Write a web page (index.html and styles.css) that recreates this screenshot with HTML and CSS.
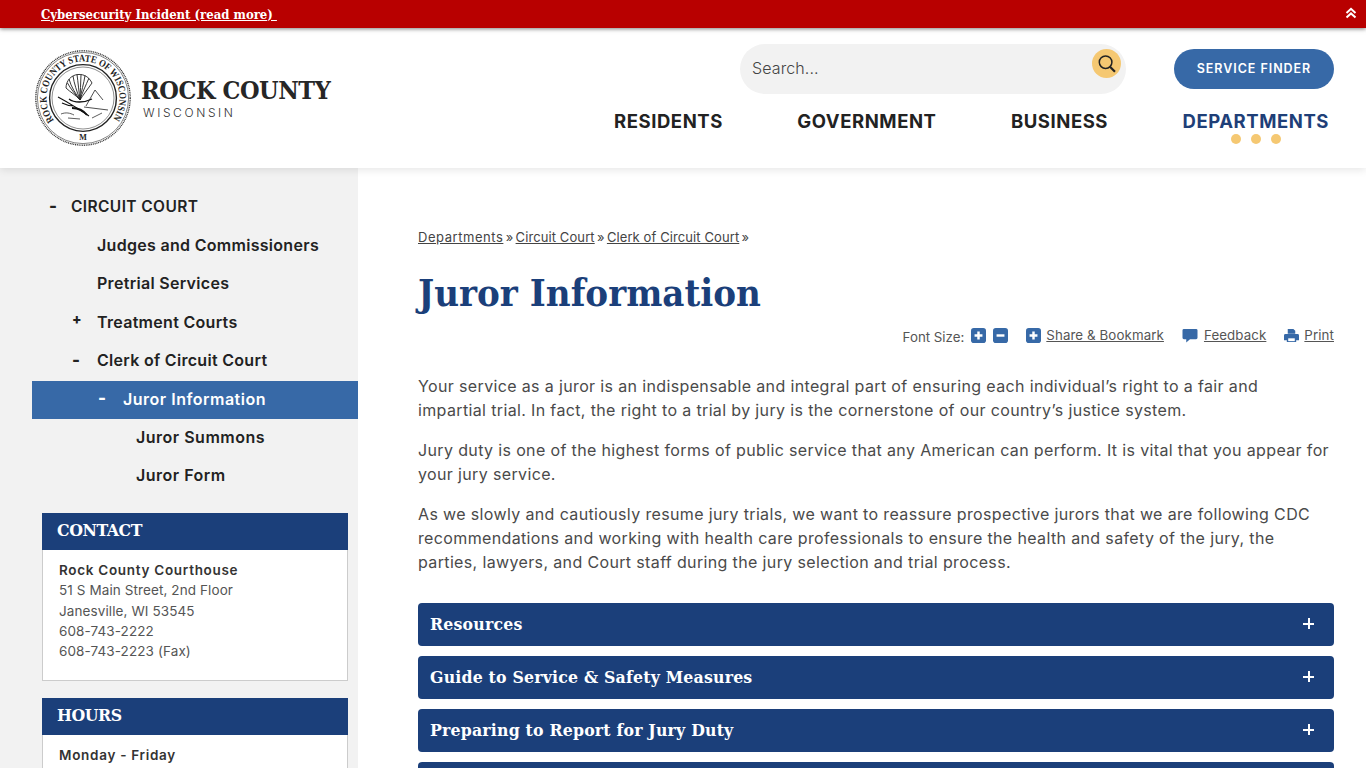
FILE: index.html
```html
<!DOCTYPE html>
<html lang="en">
<head>
    <meta charset="UTF-8">
    <meta name="viewport" content="width=device-width, initial-scale=1.0">
    <title>Juror Information - Rock County</title>
    <link rel="stylesheet" href="styles.css">
</head>
<body>
<div class="page">
    <div class="alert-bar">
        <a href="#" class="alert-link">Cybersecurity Incident (read more)&nbsp;</a>
        <svg class="alert-toggle" viewBox="0 0 12 12" width="12" height="12"><path d="M1.5 6 6 1.8 10.5 6M1.5 10.6 6 6.4l4.5 4.2" fill="none" stroke="#fff" stroke-width="2"/></svg>
    </div>

    <header class="site-header">
        <a href="#" class="logo">
            <svg class="seal" viewBox="35 50 96 96" width="98" height="96">
                <defs><path id="sealArc" d="M54.100 120.300A36.500 36.500 0 1 1 111.900 120.300"/></defs>
                <circle cx="83" cy="98" r="47.200" fill="#fff" stroke="#333" stroke-width="1.400" stroke-dasharray="1 .8"/>
                <circle cx="83" cy="98" r="45.600" fill="none" stroke="#333" stroke-width=".6"/>
                <circle cx="83" cy="98" r="33.400" fill="none" stroke="#222" stroke-width="1.400"/>
                <circle cx="83" cy="98" r="31" fill="none" stroke="#444" stroke-width=".6"/>
                <text class="seal-text"><textPath href="#sealArc" textLength="160" lengthAdjust="spacingAndGlyphs">ROCK COUNTY STATE OF WISCONSIN</textPath></text>
                <path d="M80 100C76 95 70 92 66 88M80 100C75 94 70 88 67.500 83M80 100C76 94 71 87 69 79M80 100C77 92 74 83 73 76M80 100C79 92 78 82 77 74.500M80 100C80 92 81 83 81 74.500M80 100C81 92 84 83 85 75.500M80 100C82 93 86 85 89 78M80 100C83 95 87 90 92 83M66 88C66 81 71 75 78 74.500C84 74 89 77 92 83" fill="none" stroke="#222" stroke-width=".9"/>
                <path d="M69 99C74 103 84 103 92 99" fill="none" stroke="#111" stroke-width="1.300"/>
                <path d="M58 97C64 100 72 105 80 110C83 112 86 114 89 116M62 103C66 105 70 106 74 106" fill="none" stroke="#111" stroke-width="1.100"/>
                <path d="M72 108C77 108 83 110 87 115" fill="none" stroke="#111" stroke-width="2"/>
                <path d="M86 106 95 90 103 100M84 107 108 110" fill="none" stroke="#222" stroke-width=".8"/>
                <path d="M61 114C66 112 70 113 74 115M68 118 80 119M92 118 102 113" fill="none" stroke="#333" stroke-width=".8"/>
                <text class="seal-mark" x="83" y="139.500" text-anchor="middle">M</text>
            </svg>
            <span class="logo-text">
                <span class="logo-name">ROCK COUNTY</span>
                <span class="logo-state">WISCONSIN</span>
            </span>
        </a>
        <div class="header-right">
            <div class="header-tools">
                <form class="search">
                    <input type="text" class="search-input" placeholder="Search...">
                    <button type="button" class="search-btn">
                        <svg viewBox="0 0 20 20" width="20" height="20"><circle cx="8.600" cy="8.200" r="6.300" fill="none" stroke="#222" stroke-width="1.500"/><path d="M13.200 13 18 17.800" stroke="#222" stroke-width="2.200" fill="none"/></svg>
                    </button>
                </form>
                <a href="#" class="service-btn">SERVICE FINDER</a>
            </div>
            <nav class="main-nav">
                <a href="#">RESIDENTS</a>
                <a href="#">GOVERNMENT</a>
                <a href="#">BUSINESS</a>
                <a href="#" class="current">DEPARTMENTS<span class="dots"><i></i><i></i><i></i></span></a>
            </nav>
        </div>
    </header>

    <div class="content-wrap">
        <aside class="sidebar">
            <ul class="side-nav">
                <li class="lvl0"><span class="mark">-</span><a href="#">CIRCUIT COURT</a></li>
                <li class="lvl1"><span class="mark"></span><a href="#">Judges and Commissioners</a></li>
                <li class="lvl1"><span class="mark"></span><a href="#">Pretrial Services</a></li>
                <li class="lvl1"><span class="mark plus">+</span><a href="#">Treatment Courts</a></li>
                <li class="lvl1"><span class="mark">-</span><a href="#">Clerk of Circuit Court</a></li>
                <li class="lvl2 active"><span class="mark">-</span><a href="#">Juror Information</a></li>
                <li class="lvl3"><a href="#">Juror Summons</a></li>
                <li class="lvl3"><a href="#">Juror Form</a></li>
            </ul>

            <div class="card">
                <h3 class="card-title">CONTACT</h3>
                <div class="card-body">
                    <strong>Rock County Courthouse</strong><br>
                    51 S Main Street, 2nd Floor<br>
                    Janesville, WI 53545<br>
                    608-743-2222<br>
                    608-743-2223 (Fax)
                </div>
            </div>
            <div class="card">
                <h3 class="card-title">HOURS</h3>
                <div class="card-body">
                    <strong>Monday - Friday</strong>
                </div>
            </div>
        </aside>

        <main class="main">
            <div class="breadcrumb">
                <a href="#">Departments</a> » <a href="#">Circuit Court</a> » <a href="#">Clerk of Circuit Court</a> »
            </div>
            <h1 class="page-title">Juror Information</h1>
            <div class="page-tools">
                <span class="font-label">Font Size:</span>
                <svg class="tool-icon" viewBox="0 0 16 16"><rect width="16" height="16" rx="3" fill="#3769a7"/><path d="M8 3.800v8.400M3.800 8h8.400" stroke="#fff" stroke-width="2.600"/></svg>
                <svg class="tool-icon" viewBox="0 0 16 16"><rect width="16" height="16" rx="3" fill="#3769a7"/><path d="M3.800 8h8.400" stroke="#fff" stroke-width="2.600"/></svg>
                <span class="tool">
                    <svg class="tool-icon" viewBox="0 0 16 16"><rect width="16" height="16" rx="3" fill="#3769a7"/><path d="M8 3.800v8.400M3.800 8h8.400" stroke="#fff" stroke-width="2.600"/></svg>
                    <a href="#">Share &amp; Bookmark</a>
                </span>
                <span class="tool">
                    <svg class="tool-icon wide" viewBox="0 0 16 16"><path d="M1.500 1h13A1.500 1.500 0 0 1 16 2.500v8a1.500 1.500 0 0 1-1.500 1.500H8l-4 3.500V12H1.500A1.500 1.500 0 0 1 0 10.500v-8A1.500 1.500 0 0 1 1.500 1Z" fill="#3769a7"/></svg>
                    <a href="#">Feedback</a>
                </span>
                <span class="tool">
                    <svg class="tool-icon" viewBox="0 0 16 16"><path d="M4 1h6l2 2v3H4ZM1.500 6.500h13A1.500 1.500 0 0 1 16 8v5h-3v2H3v-2H0V8a1.500 1.500 0 0 1 1.500-1.500Z" fill="#3769a7"/><path d="M4.500 11h7v3h-7Z" fill="#fff"/></svg>
                    <a href="#">Print</a>
                </span>
            </div>

            <div class="article">
                <p>Your service as a juror is an indispensable and integral part of ensuring each individual’s right to a fair and impartial trial. In fact, the right to a trial by jury is the cornerstone of our country’s justice system.</p>
                <p>Jury duty is one of the highest forms of public service that any American can perform. It is vital that you appear for your jury service.</p>
                <p>As we slowly and cautiously resume jury trials, we want to reassure prospective jurors that we are following CDC recommendations and working with health care professionals to ensure the health and safety of the jury, the parties, lawyers, and Court staff during the jury selection and trial process.</p>
            </div>

            <div class="accordion">
                <div class="acc-item"><span>Resources</span><b class="acc-plus"></b></div>
                <div class="acc-item"><span>Guide to Service &amp; Safety Measures</span><b class="acc-plus"></b></div>
                <div class="acc-item"><span>Preparing to Report for Jury Duty</span><b class="acc-plus"></b></div>
                <div class="acc-item"></div>
            </div>
        </main>
    </div>
</div>
</body>
</html>
```

FILE: styles.css
```css
html, body {
    margin: 0;
    padding: 0;
}

body {
    font-family: Inter, "Noto Sans", sans-serif;
    color: #444;
    background-color: #fff;
}

a {
    color: inherit;
}

.page {
    height: 768px;
    overflow: hidden;
}

/* top alert */
.alert-bar {
    position: relative;
    z-index: 3;
    height: 28px;
    background-color: #b80000;
    box-shadow: 0 1px 4px rgba(0, 0, 0, 0.5);
    display: flex;
    justify-content: space-between;
    align-items: center;
    padding: 0 9px 0 41px;
}

.alert-link {
    font-family: "DejaVu Serif", serif;
    font-stretch: condensed;
    font-weight: 700;
    font-size: 13px;
    color: #fff;
}

.alert-toggle {
    margin-top: -3px;
}

/* header */
.site-header {
    position: relative;
    z-index: 2;
    height: 140px;
    background-color: #fff;
    box-shadow: 0 2px 8px rgba(0, 0, 0, 0.1);
    display: flex;
    justify-content: space-between;
    padding: 0 32px 0 34px;
}

.logo {
    display: flex;
    align-items: center;
    text-decoration: none;
    height: 140px;
}

.seal-text {
    font-family: "Liberation Serif", serif;
    font-weight: 700;
    font-size: 10px;
    fill: #222;
}

.seal-mark {
    font-family: "Liberation Serif", serif;
    font-weight: 700;
    font-size: 8px;
    fill: #222;
}

.logo-text {
    display: flex;
    flex-direction: column;
    margin-left: 9px;
}

.logo-name {
    font-family: "DejaVu Serif", serif;
    font-stretch: condensed;
    font-weight: 700;
    font-size: 25px;
    line-height: 30px;
    color: #262626;
    letter-spacing: -0.43px;
}

.logo-state {
    font-size: 12px;
    line-height: 14px;
    font-weight: 300;
    letter-spacing: 2.600px;
    color: #333;
    margin-left: 2px;
}

.header-right {
    display: flex;
    flex-direction: column;
    align-items: flex-end;
}

.header-tools {
    display: flex;
    align-items: flex-start;
    padding-top: 16px;
}

.search {
    width: 386px;
    height: 50px;
    background-color: #f2f2f2;
    border-radius: 25px;
    display: flex;
    position: relative;
}

.search-input {
    flex: 1;
    border: none;
    background: transparent;
    outline: none;
    padding: 0 50px 2px 12px;
    font-family: inherit;
    font-size: 16px;
    font-weight: 300;
    letter-spacing: 0.1px;
}

.search-input::placeholder {
    color: #444;
    opacity: 1;
}

.search-btn {
    position: absolute;
    top: 5px;
    right: 5px;
    width: 29px;
    height: 29px;
    border: none;
    border-radius: 50%;
    padding: 0;
    background-color: #f5c872;
    display: flex;
    align-items: center;
    justify-content: center;
}

.service-btn {
    margin: 5px 0 0 48px;
    width: 160px;
    height: 40px;
    line-height: 40px;
    text-align: center;
    border-radius: 20px;
    background-color: #3769a7;
    color: #fff;
    font-size: 12.500px;
    font-weight: 600;
    letter-spacing: 0.95px;
    text-decoration: none;
}

.main-nav {
    display: flex;
    gap: 74.500px;
    margin-top: 15px;
    padding-right: 5px;
}

.main-nav a {
    position: relative;
    font-size: 18.500px;
    font-weight: 700;
    line-height: 24px;
    letter-spacing: 0.55px;
    color: #222;
    text-decoration: none;
}

.main-nav a.current {
    color: #1f3f78;
}

.dots {
    position: absolute;
    left: 0;
    right: 0;
    top: 25px;
    display: flex;
    justify-content: center;
    gap: 10px;
}

.dots i {
    width: 10px;
    height: 10px;
    border-radius: 50%;
    background-color: #f5c872;
}

/* below header */
.content-wrap {
    display: flex;
    height: 600px;
}

.sidebar {
    width: 358px;
    flex: none;
    background-color: #f2f2f2;
    padding: 19px 0 0 32px;
    box-sizing: border-box;
}

.side-nav {
    list-style: none;
    margin: 0 0 17px;
    padding: 0;
}

.side-nav li {
    display: flex;
    align-items: center;
    box-sizing: border-box;
    height: 38.400px;
    padding-bottom: 3px;
    font-size: 16px;
    font-weight: 600;
    letter-spacing: 0.3px;
    color: #222;
}

.side-nav a {
    text-decoration: none;
}

.mark {
    font-weight: 800;
    font-size: 17px;
    line-height: 1;
}

.mark.plus {
    font-size: 14px;
    margin-top: -6px;
}

.side-nav .lvl0 {
    height: 40.400px;
    padding-left: 17px;
    padding-bottom: 2px;
    font-size: 15.500px;
    letter-spacing: 0.4px;
}

.lvl0 .mark {
    width: 22px;
}

.lvl1 {
    padding-left: 40px;
}

.lvl1 .mark {
    width: 25px;
}

.side-nav .lvl2 {
    padding-left: 66px;
    letter-spacing: 0.5px;
}

.lvl2 .mark {
    width: 25px;
}

.side-nav .lvl3 {
    padding-left: 104px;
    letter-spacing: 0.5px;
}

.side-nav li.active {
    background-color: #3769a7;
    color: #fff;
}

.card {
    width: 306px;
    margin: 0 0 17px 10px;
    box-sizing: border-box;
    background-color: #fff;
    border: 1px solid #ccc;
    border-top: none;
}

.card-title {
    margin: 0 -1px;
    height: 37px;
    line-height: 35px;
    padding-left: 15px;
    background-color: #1b3f7a;
    color: #fff;
    font-family: "DejaVu Serif", serif;
    font-stretch: condensed;
    font-size: 17.500px;
    font-weight: 700;
    letter-spacing: -0.4px;
}

.card-body {
    padding: 10px 16px 18px;
    font-size: 13.500px;
    line-height: 20.300px;
    font-weight: 400;
    letter-spacing: 0.1px;
    color: #555;
}

.card-body strong {
    font-weight: 600;
    letter-spacing: 0.7px;
    color: #333;
}

/* main column */
.main {
    flex: 1;
    padding: 61px 32px 0 60px;
    min-width: 0;
}

.breadcrumb {
    font-size: 13px;
    line-height: 16px;
    letter-spacing: 0.1px;
    word-spacing: -1.500px;
    color: #444;
}

.breadcrumb a {
    word-spacing: 0;
}

.breadcrumb a:first-child {
    letter-spacing: 0.55px;
}

.page-title {
    margin: 24px 0 0;
    font-family: "DejaVu Serif", serif;
    font-stretch: condensed;
    font-size: 38px;
    line-height: 48px;
    font-weight: 700;
    color: #1b3f7a;
}

.page-tools {
    display: flex;
    justify-content: flex-end;
    align-items: center;
    margin-top: 6px;
    height: 24px;
    font-size: 13.300px;
    letter-spacing: 0.1px;
    color: #555;
}

.tool-icon {
    width: 15px;
    height: 15px;
    margin-left: 7px;
    flex: none;
}

.tool {
    display: flex;
    align-items: center;
    margin-left: 18px;
}

.tool .tool-icon {
    margin: 0 5px 0 0;
}

.tool .tool-icon.wide {
    width: 16px;
    margin-right: 6px;
}

.font-label {
    margin-top: 3px;
    letter-spacing: 0;
}

.article {
    margin-top: 27px;
    max-width: 911px;
}

.article p {
    margin: 0 0 16px;
    font-size: 16px;
    line-height: 24px;
    font-weight: 400;
    letter-spacing: 0.36px;
    color: #4a4a4a;
}

.accordion {
    margin-top: 29px;
    display: flex;
    flex-direction: column;
    gap: 10px;
}

.acc-item {
    height: 43px;
    flex: none;
    box-sizing: border-box;
    background-color: #1b3f7a;
    border-radius: 4px;
    display: flex;
    align-items: center;
    justify-content: space-between;
    padding: 0 20px 2px 12px;
    color: #fff;
    font-family: "DejaVu Serif", serif;
    font-stretch: condensed;
    font-size: 17.500px;
    font-weight: 700;
    letter-spacing: 0.2px;
}

.acc-plus {
    position: relative;
    width: 11px;
    height: 11px;
}

.acc-plus::before, .acc-plus::after {
    content: "";
    position: absolute;
    background-color: #fff;
}

.acc-plus::before {
    left: 0;
    right: 0;
    top: 4.500px;
    height: 2px;
}

.acc-plus::after {
    top: 0;
    bottom: 0;
    left: 4.500px;
    width: 2px;
}
```
